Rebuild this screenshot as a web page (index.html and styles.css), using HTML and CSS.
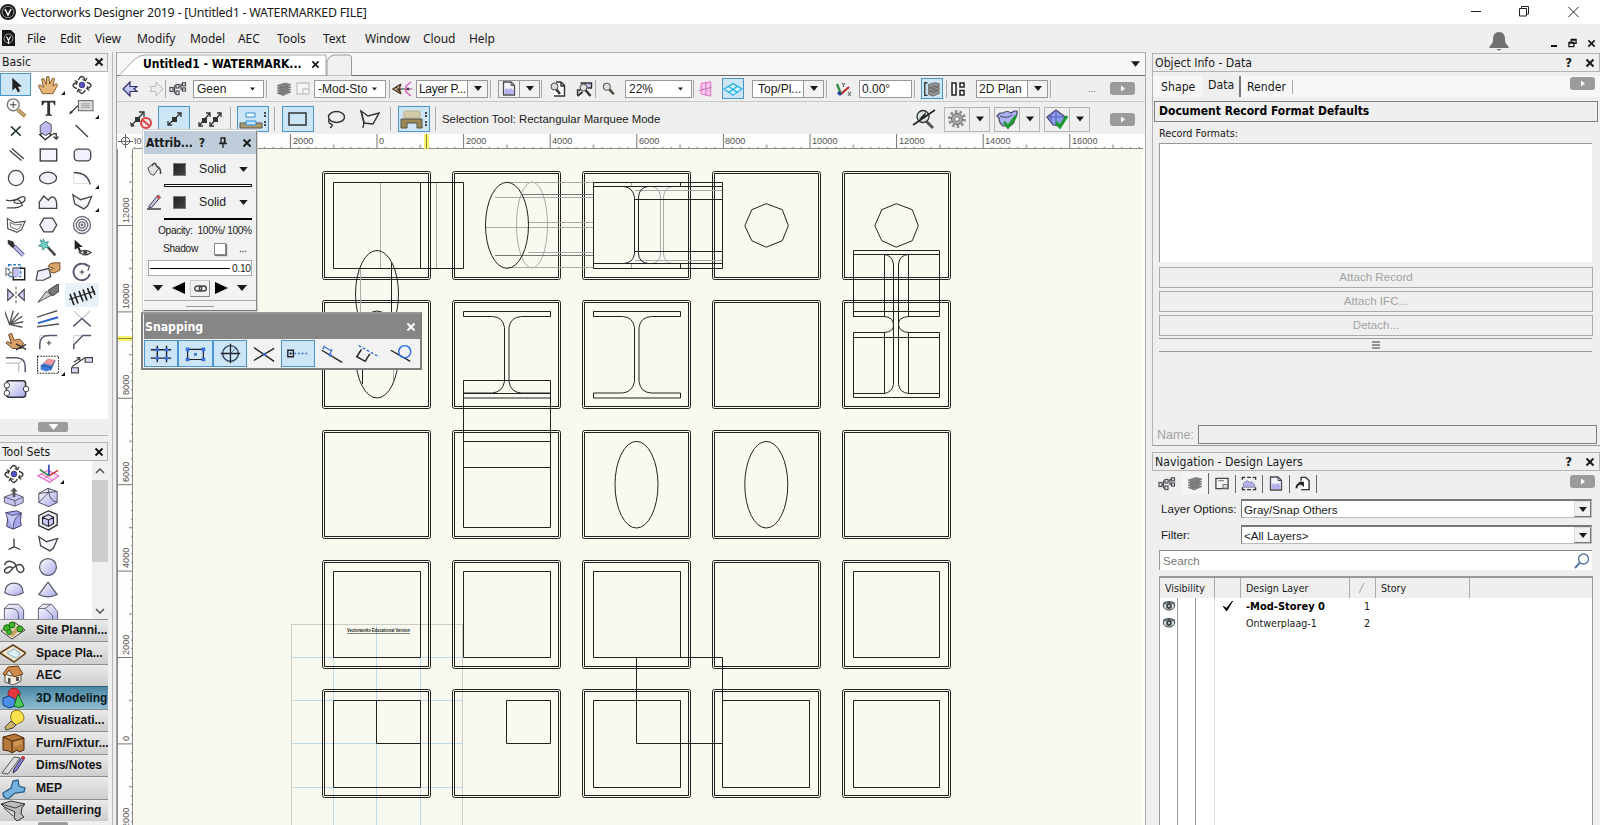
FILE: index.html
```html
<!DOCTYPE html>
<html lang="en">
<head>
<meta charset="utf-8">
<title>Vectorworks Designer 2019</title>
<link rel="stylesheet" href="styles.css">
</head>
<body>
<svg class="defs" width="0" height="0">
  <defs>
    <linearGradient id="lav" x1="0" y1="0" x2="1" y2="1"><stop offset="0" stop-color="#fff"/><stop offset="1" stop-color="#aaa9ea"/></linearGradient>
    <symbol id="i-x" viewBox="0 0 10 10"><path d="M1.500 1.500l7 7M8.500 1.500l-7 7" fill="none" stroke="currentColor" stroke-width="1.900"/></symbol>
    <symbol id="i-down" viewBox="0 0 10 6"><path d="M0 0h10L5 6z" fill="currentColor"/></symbol>
    <symbol id="i-tree" viewBox="0 0 18 14"><g fill="none" stroke="#4d4d55" stroke-width="1.200"><rect x="1" y="5.500" width="3" height="4"/><rect x="7" y="2.500" width="3" height="3.500"/><rect x="7" y="9" width="3" height="3.500"/><rect x="13.500" y=".8" width="3" height="3"/><rect x="13.500" y="6" width="3" height="3"/><path d="M4 7.500h1.500V4H7M5.500 7.500V11H7M10 4h2V2.300h1.500M12 4v3.500h1.500"/></g></symbol>
    <symbol id="i-layers" viewBox="0 0 16 14"><g fill="#858585" stroke="#5e5e5e" stroke-width=".6"><path d="M1 11l8-2.500 6 1.500-8 3.500z"/><path d="M1 8.500L9 6l6 1.500L7 11z"/><path d="M1 6l8-2.500L15 5 7 8.500z"/><path d="M1 3.500L9 1l6 1.500L7 6z"/></g></symbol>
    <symbol id="i-orbit" viewBox="0 0 24 24"><g fill="none" stroke="#3a3a3a" stroke-width="1.500"><path d="M8 6.500Q12-1 15.500 6.500M8 17.500q4 7.500 7.500 0"/><path d="M6.500 9Q-2 12.500 6.500 16M17.500 9q8.500 3.500 0 7"/><path d="M12.500 6l3.500 1.500L17.500 4M11.500 18L8 16.500 6.500 20M4 7l3 1.800L5.500 12M20 18l-3-2 1.500-3" stroke-width="1.200"/></g><circle cx="12" cy="12" r="3.200" fill="#5350c8" stroke="#222" stroke-width=".6"/></symbol>
    <symbol id="i-polyline" viewBox="0 0 24 24"><path d="M2 4l8.500 5.500L22.500 6 18 16.500l-4 3L4 14z" fill="#f7f7ff" stroke="#444" stroke-width="1.400"/></symbol>
    <symbol id="i-next" viewBox="0 0 25 13"><rect width="25" height="13" rx="3" fill="#9b9b9b"/><path d="M11 3.500v6l4-3z" fill="#fff"/></symbol>
    <symbol id="i-doc" viewBox="0 0 14 15"><path d="M1.500 1h7.500l3.500 3.500V14h-11z" fill="#f4f4fb" stroke="#4b4b55" stroke-width="1.300"/><path d="M9 1v3.500h3.500" fill="none" stroke="#4b4b55"/><path d="M2.500 13V9l2-2 2 1.500L9 7l2.500 2.500V13z" fill="#b4b1ee"/></symbol>
    <symbol id="i-mag" viewBox="0 0 16 16"><path d="M8.500 8.500l5 5.500" stroke="#4c473f" stroke-width="2.800"/><circle cx="5.500" cy="5.500" r="4" fill="#dededa" stroke="#5c5c5c" stroke-width="1.200"/></symbol>
    <symbol id="i-eye" viewBox="0 0 14 12"><path d="M1 5q6-5 12 0-1 5-6 5T1 5z" fill="#d6dfe2" stroke="#3d474a"/><circle cx="7" cy="6" r="2.900" fill="#3d474a"/><circle cx="7" cy="6" r="1" fill="#dde6e9"/><path d="M1 3.500q6-4 12 0" fill="none" stroke="#3d474a" stroke-width="1.200"/></symbol>
    <symbol id="i-rest2" viewBox="0 0 10 10"><g fill="#efefef" stroke="#111" stroke-width="1.400"><path d="M3.500 1h5.500v4.500H3.500z"/><path d="M1 4.300h5.500V9H1zM1 5.200h5.500M3.500 1.800h5.500"/></g></symbol>

    <g id="cell"><rect x=".5" y=".5" width="108" height="108" rx="2"/><rect x="2.500" y="2.500" width="104" height="104"/></g>
    <g id="beam"><path d="M0 0h87v5H58q-11 .5-12.500 11v54q1.500 11 12.500 11.500h29V86.500H0v-5h29q10-1 12-11.500V16Q39.500 5.500 29 5H0z"/></g>
    <path id="octagon" d="M21.500 0l16 6 6 16-6 15-16 6.500-14.500-6.500-7-15 7-16z"/>
    <pattern id="hticks" patternUnits="userSpaceOnUse" x="376.500" y="134" width="86.600" height="15"><path d="M.5 0v15M43.800 10.500v4.500M9.200 13v2M17.800 13v2M26.500 13v2M35.100 13v2M52.500 13v2M61.100 13v2M69.800 13v2M78.400 13v2" stroke="#777" fill="none"/></pattern>
    <pattern id="vticks" patternUnits="userSpaceOnUse" x="118" y="225" width="15" height="86.400"><path d="M0 .5h15M11 43.500h4M13 9.100h2M13 17.800h2M13 26.400h2M13 35.100h2M13 52.300h2M13 61h2M13 69.600h2M13 78.300h2" stroke="#777" fill="none"/></pattern>
  </defs>
</svg>

<header class="titlebar">
  <svg class="logo" viewBox="0 0 16 16"><circle cx="8" cy="8" r="8" fill="#1b1b1b"/><circle cx="8" cy="8" r="5.800" fill="none" stroke="#aaa" stroke-width=".8"/><path d="M5 5l3 6 3-6" fill="none" stroke="#fff" stroke-width="1.600"/></svg>
  <span class="title">Vectorworks Designer 2019 - [Untitled1 - WATERMARKED FILE]</span>
  <svg class="winbtns" viewBox="0 0 120 24"><g fill="none" stroke="#222"><path d="M6 11.500h10M103.500 7l10 10M113.500 7l-10 10"/><path d="M54.500 8.500h7v7.500h-7zM56.500 8.500v-2h7v7.500h-2"/></g></svg>
</header>

<nav class="menubar">
  <svg class="docicon" viewBox="0 0 13 16"><path d="M0 0h9l4 4v12H0z" fill="#151515"/><circle cx="6.500" cy="8.500" r="4.500" fill="none" stroke="#ccc" stroke-width=".8"/><path d="M4.500 6.500l2 4 2-4M6.500 11v3" stroke="#fff" stroke-width="1.200" fill="none"/></svg>
  <span class="w33">File</span><span class="w35">Edit</span><span class="w42">View</span><span class="w53">Modify</span><span class="w48">Model</span><span class="w39">AEC</span><span class="w46">Tools</span><span class="w42">Text</span><span class="w58">Window</span><span class="w46">Cloud</span><span class="w40">Help</span>
  <svg class="bell" viewBox="0 0 20 19"><path d="M10 0c4 0 6 3 6 7 0 4 1 5 3.500 7.500v1.500H.5v-1.500C3 12 4 11 4 7c0-4 2-7 6-7zM7.500 17h5q-2.500 3-5 0z" fill="#707070"/></svg>
  <span class="docbtns"><i class="minus"></i><svg width="9" height="10"><use href="#i-rest2"/></svg><svg width="9" height="9"><use href="#i-x"/></svg></span>
</nav>

<div class="workspace">
  <aside class="left">
    <div class="palhead basic"><span>Basic</span><svg width="10" height="10"><use href="#i-x"/></svg></div>
    <div class="tools">
      <div class="t on"><svg viewBox="0 0 24 24"><path d="M8 4v14l3.500-3 2.500 5 2.500-1.200-2.500-5 4.500-.3z" fill="#222"/></svg></div>
      <div class="t more"><svg viewBox="0 0 24 24"><path d="M6 21.500L1.500 13l1.500-1.500 4 3L5 5.500 7.500 5l2.500 6.500L10.500 3H13l.8 8L17 4.500l2 .8-1.500 8 3.500-3 1.500 1.500L17.500 21.500z" fill="#e9b67a" stroke="#7b5527"/></svg></div>
      <div class="t"><svg><use href="#i-orbit"/></svg></div>
      <div class="t"><svg viewBox="0 0 24 24"><path d="M14 14l8 7" stroke="#a27643" stroke-width="4"/><path d="M14 14l8 7" stroke="#dcbf88" stroke-width="1.500"/><circle cx="9" cy="8.500" r="6.500" fill="#fafafa" stroke="#777" stroke-width="1.500"/><path d="M9 5v7M5.500 8.500h7" stroke="#333"/></svg></div>
      <div class="t"><svg viewBox="0 0 24 24"><path d="M5 4h15v5h-1L17.500 6h-3.200v12.500l2.200 1v1H9v-1l2.200-1V6H8L6.500 9H5z" fill="#333"/></svg></div>
      <div class="t more"><svg viewBox="0 0 24 24" overflow="visible"><path d="M-1 18l8-8h2" stroke="#333" fill="none" stroke-width="1.300"/><rect x="8" y="4" width="16" height="11" fill="#ddd" stroke="#555"/><path d="M11 7.500h10M11 9.500h10M11 11.500h10" stroke="#999"/><path d="M-2 19l1.500-4L2 17z" fill="#333"/></svg></div>
      <div class="t"><svg viewBox="0 0 24 24"><path d="M6.500 7l10.500 10M17 7L6.500 17" stroke="#263b3b" stroke-width="1.700"/></svg></div>
      <div class="t"><svg viewBox="0 0 24 24"><path d="M3 16l6-3 7 3-7 5.500z" fill="#fff" stroke="#222" stroke-width="1.500"/><path d="M3.500 6l6-4.500 6 3.500v8l-6 4-6-3.500z" fill="#bbb9f0" stroke="#444"/><path d="M17 15h4v5M18 18l3 3 2.500-3" fill="none" stroke="#444" stroke-width="1.500"/></svg></div>
      <div class="t"><svg viewBox="0 0 24 24"><path d="M5 5.500l13.500 13" stroke="#444" stroke-width="1.500"/></svg></div>
      <div class="t"><svg viewBox="0 0 24 24"><path d="M5 7l13 11M7.500 5l13 11" stroke="#444" stroke-width="1.500"/></svg></div>
      <div class="t"><svg viewBox="0 0 24 24"><rect x="3.500" y="5.500" width="18" height="13" fill="#f5f5ff" stroke="#333" stroke-width="1.400"/></svg></div>
      <div class="t"><svg viewBox="0 0 24 24"><rect x="3.500" y="5.500" width="18" height="13" rx="4" fill="#f0f0ff" stroke="#444" stroke-width="1.400"/></svg></div>
      <div class="t"><svg viewBox="0 0 24 24"><circle cx="12" cy="12" r="8.300" fill="#fafaff" stroke="#444" stroke-width="1.400"/></svg></div>
      <div class="t"><svg viewBox="0 0 24 24"><ellipse cx="12" cy="12" rx="9.300" ry="6.300" fill="#f2f2ff" stroke="#444" stroke-width="1.400"/></svg></div>
      <div class="t more"><svg viewBox="0 0 24 24"><path d="M3 6v12h18" fill="none" stroke="#ddd"/><path d="M3 6q15 0 18 13" fill="#f2f2ff" stroke="#444" stroke-width="1.400"/></svg></div>
      <div class="t"><svg viewBox="0 0 24 24"><path d="M1 10q9 2 15-2.500 5-3 6 .5 0 5-7 5.500-6 0-5-3 2-3 7 1l2 4q-4 3-13 3H2" fill="none" stroke="#444" stroke-width="1.400"/></svg></div>
      <div class="t"><svg viewBox="0 0 24 24"><path d="M2.500 19v-7L7.500 5.500l5 4.500q3-5 6-3 3.500 2 3 12z" fill="#f2f2ff" stroke="#444" stroke-width="1.400"/></svg></div>
      <div class="t more"><svg><use href="#i-polyline"/></svg></div>
      <div class="t"><svg viewBox="0 0 24 24"><path d="M2.500 5l8 4.500L22 8l-4 9-5 3-10-4z" fill="#fff" stroke="#555" stroke-width="1.300"/><path d="M5.500 9l6 3 6.500-1-2 4-3 2-7-3z" fill="none" stroke="#666"/></svg></div>
      <div class="t"><svg viewBox="0 0 24 24"><path d="M3 12l4.500-7.500h9.500L21.500 12 17 19.500H7.500z" fill="#f2f2ff" stroke="#444" stroke-width="1.400"/></svg></div>
      <div class="t"><svg viewBox="0 0 24 24"><g fill="none" stroke="#737382" stroke-width="1.500"><circle cx="12" cy="12" r="9.300"/><circle cx="12" cy="12" r="6.300"/><circle cx="12" cy="12" r="3.400"/><circle cx="12" cy="12" r=".8"/></g></svg></div>
      <div class="t"><svg viewBox="0 0 24 24"><path d="M10 10l10 10" stroke="#55558c" stroke-width="4.500"/><path d="M10 10l10 10" stroke="#c3c1f2" stroke-width="2.500"/><path d="M3 3l6 2 2 5-3 2-5-5z" fill="#333"/></svg></div>
      <div class="t"><svg viewBox="0 0 24 24"><path d="M10 9l10 11" stroke="#444" stroke-width="2.800"/><path d="M7 2l1.500 4 4-1-2 3.500 3 3H9l-2.500 3-1-4-4-1L5 7.500 3.500 3l3 2z" fill="#6fd0c8" stroke="#347e7a" stroke-width=".8"/></svg></div>
      <div class="t"><svg viewBox="0 0 24 24"><path d="M4 3v11l3-2 2 4 2-1-2-4h4z" fill="#222"/><path d="M9 17q6-5 13 0-6 5-13 0z" fill="#eee" stroke="#444" stroke-width="1.400"/><circle cx="15.500" cy="17" r="2.200" fill="#444"/></svg></div>
      <div class="t"><svg viewBox="0 0 24 24"><path d="M4 4h13v13H4z" fill="none" stroke="#2b7bc4" stroke-width="1.700" stroke-dasharray="3 2"/><path d="M9 8h12.500v12.500H9z" fill="none" stroke="#222" stroke-width="1.600"/><path d="M9 8h7v9H9z" fill="#c5c3f3"/><path d="M1 7v9l2-2 2 3M1 7l6 6H4" stroke="#555" fill="#fff"/></svg></div>
      <div class="t"><svg viewBox="0 0 24 24" overflow="visible"><path d="M1 11l12-3 2 9-8 4H-1z" fill="#eef" stroke="#444" stroke-width="1.300"/><path d="M12 6q2-4 6-4h7v8l-6 3q-5 0-6-3l5-2z" fill="#dba469" stroke="#6c4621"/></svg></div>
      <div class="t"><svg viewBox="0 0 24 24"><path d="M18 5.500A9 9 0 1 0 20.500 14" fill="none" stroke="#555870" stroke-width="2"/><path d="M14.500 2.500l5.500 3-1.500 5" fill="none" stroke="#555870" stroke-width="1.500"/><path d="M12 9.500v5M9.500 12h5" stroke="#333"/></svg></div>
      <div class="t"><svg viewBox="0 0 24 24"><path d="M3 6l6.500 6L3 18zM21 6l-6.500 6 6.500 6z" fill="#d4d3f6" stroke="#445" stroke-width="1.300"/><path d="M12 3v18" stroke="#444" stroke-dasharray="3 2"/></svg></div>
      <div class="t"><svg viewBox="0 0 24 24"><path d="M1 20l9-12 6 4z" fill="#ccc" stroke="#444"/><path d="M12 7L24-1v9l-7 5z" fill="#777" stroke="#333"/></svg></div>
      <div class="t hov"><svg class="wide" viewBox="0 0 28 24"><path d="M1 16.500L27 8" stroke="#222" stroke-width="1.300"/><path d="M2 11l4 11M6 9.500l4 11M11 8l4 10.500M15 6.500l4 11M19.500 5l4 10.500M23.500 3l3.500 9" stroke="#222" stroke-width="1.700"/></svg></div>
      <div class="t"><svg viewBox="0 0 24 24"><path d="M-1 2l6 16 14 3M5 18L9 3M5 18L15 5M5 18l14-9M5 18l15-3" fill="none" stroke="#555" stroke-width="1.500"/></svg></div>
      <div class="t"><svg viewBox="0 0 24 24"><path d="M0 10L22 3M0 20.500l24-3" stroke="#555" stroke-width="1.500"/><path d="M1 16.500L23 10" stroke="#2b62cc" stroke-width="2.200"/></svg></div>
      <div class="t"><svg viewBox="0 0 24 24"><path d="M3 3l9 9 9-9" fill="none" stroke="#ccc" stroke-width="1.500"/><path d="M2.500 20L12 11.500l9.500 8.500" fill="none" stroke="#555870" stroke-width="1.600"/></svg></div>
      <div class="t"><svg viewBox="0 0 24 24"><path d="M4 4l3-1.500 3 7.500 6-1 4 4-2 6H8L1 13l2-1.500 4 2.500z" fill="#d9a065" stroke="#5e3c19"/><path d="M12 14l11 6M12 20.500l11-6" stroke="#333" stroke-width="1.600"/></svg></div>
      <div class="t"><svg viewBox="0 0 24 24"><path d="M3 19V5h16" fill="none" stroke="#ccc"/><path d="M3 20v-5Q3 5 13 5h9" fill="none" stroke="#555870" stroke-width="1.600"/><path d="M13 10.500v5M10.500 13h5" stroke="#333"/></svg></div>
      <div class="t"><svg viewBox="0 0 24 24"><path d="M3 19V5h16" fill="none" stroke="#ccc"/><path d="M3 20v-5L13 5h9" fill="none" stroke="#555870" stroke-width="1.600"/></svg></div>
      <div class="t"><svg viewBox="0 0 24 24"><path d="M1 4h12q9 1 9 9v7" fill="none" stroke="#555870" stroke-width="1.600"/><path d="M1 10h14v10M15 10l3-3" fill="none" stroke="#aaa"/></svg></div>
      <div class="t more"><svg viewBox="0 0 24 24"><rect x=".5" y="2.500" width="23" height="18.500" fill="none" stroke="#333" stroke-width="1.200" stroke-dasharray="2 1"/><path d="M4 13l7-7 9 1-4 10-6 2-6-2z" fill="#3e7ed8"/><path d="M8 9l4-4 8 1.500-3 6-9-2z" fill="#ee9696"/><path d="M4 12l11 3 5-8M15 15v3" fill="none" stroke="#1f4587" stroke-width=".8"/></svg></div>
      <div class="t"><svg viewBox="0 0 24 24"><path d="M.5 15H8v5.500H.5zM15.500 4h8v5h-8z" fill="#dddcf7" stroke="#444" stroke-width="1.300"/><path d="M1 14L15 4M3 9l6-4M6 4h3.500v3" fill="none" stroke="#444" stroke-width="1.400"/></svg></div>
      <div class="t"><svg viewBox="0 0 24 24" overflow="visible"><rect x="1.500" y="3" width="21" height="18" rx="3" fill="url(#lav)" stroke="#333" stroke-width="1.600"/><circle cx="2" cy="8" r="3" fill="#fff" stroke="#333"/><circle cx="2" cy="16.500" r="3" fill="#fff" stroke="#333"/><circle cx="23" cy="12" r="3" fill="#fff" stroke="#333"/></svg></div>
    </div>
    <div class="collapse"><b><svg width="11" height="6"><use href="#i-down"/></svg></b></div>
    <div class="palhead sets"><span>Tool Sets</span><svg width="10" height="10"><use href="#i-x"/></svg></div>
    <div class="setrow">
      <div class="settools">
        <div class="t"><svg><use href="#i-orbit"/></svg></div>
        <div class="t more"><svg viewBox="0 0 24 24"><path d="M1 14l11-6 12 6-10 7z" fill="#fde4f7" stroke="#e569c4" stroke-width="1.300"/><path d="M5 12l12 7M18 11L7 17" stroke="#e569c4"/><path d="M13 14V2" stroke="#3344bb" stroke-width="1.800"/><path d="M13 14l10-6" stroke="#c33" stroke-width="1.500"/><path d="M13 14L3 7" stroke="#2a8a3a" stroke-width="1.500"/></svg></div>
        <div class="t"><svg viewBox="0 0 24 24"><path d="M1.500 12L12 8l10 4v6l-9 4-11.500-4z" fill="#c6c5f1" stroke="#556"/><path d="M1.500 12L13 16l9-4M13 16v6" fill="none" stroke="#556"/><path d="M10.500 12V6H8l4-4.500L16 6h-2.500v6z" fill="#555"/></svg></div>
        <div class="t"><svg viewBox="0 0 24 24"><path d="M2 8l10-5.500L22 6v12l-9 4.500L2 18z" fill="url(#lav)" stroke="#445"/><path d="M2 18L13 7l9-1M12 2.500l1 4.500q1 9 9 11M13 7L2 8" fill="none" stroke="#445"/></svg></div>
        <div class="t"><svg viewBox="0 0 24 24"><path d="M3 4l12-2 5 2.500-1 8 1 5.500-9 4-7-3 1-8z" fill="#a7a6ee" stroke="#335"/><path d="M3 4l7 3 10-2.500Q13 9 12 14t-1 8" fill="#c9c8f6" stroke="#335" stroke-width=".8"/></svg></div>
        <div class="t"><svg viewBox="0 0 24 24"><path d="M2 7l10.500-5L22 6v11.500L12.500 23 2 18z" fill="#eee" stroke="#222" stroke-width="1.300"/><path d="M6 9l6.500-3L18 9v7l-5.500 3L6 16zM6 9l6.500 3L18 9M12.500 12v7" fill="#c9c8f3" stroke="#223" stroke-width="1.200"/></svg></div>
        <div class="t"><svg viewBox="0 0 24 24"><path d="M12 6v9l-6 3M12 15l7 3" fill="none" stroke="#333" stroke-width="1.400"/></svg></div>
        <div class="t"><svg><use href="#i-polyline"/></svg></div>
        <div class="t"><svg viewBox="0 0 24 24"><path d="M1.500 10q2-5 7-4t6 6q1 6 5 6 4-1 3-5-2-5-6-3.500-5 2.500-8 6.500-4 4-6.500 1.500-1.500-3 3-5t6 2" fill="none" stroke="#444" stroke-width="1.600"/></svg></div>
        <div class="t"><svg viewBox="0 0 24 24"><circle cx="12" cy="12" r="9.200" fill="url(#lav)" stroke="#556" stroke-width="1.300"/></svg></div>
        <div class="t"><svg viewBox="0 0 24 24"><path d="M2 15Q2.500 4.500 12 4.500T22 15q-10 6-20 0z" fill="url(#lav)" stroke="#556" stroke-width="1.300"/></svg></div>
        <div class="t"><svg viewBox="0 0 24 24"><path d="M12 3.500L22 17q-10 5-20 0z" fill="url(#lav)" stroke="#556" stroke-width="1.300"/></svg></div>
        <div class="t"><svg viewBox="0 0 24 24"><path d="M1.500 7l5-4.500H17l5.500 6V22h-21z" fill="url(#lav)" stroke="#556"/><path d="M1.500 7H10q7 1 7 8v7" fill="none" stroke="#556"/></svg></div>
        <div class="t"><svg viewBox="0 0 24 24"><path d="M1.500 7l5-4.500H16l6.500 8V22h-21z" fill="url(#lav)" stroke="#556"/><path d="M1.500 7H9l8 8v7M9 7l6-4.500" fill="none" stroke="#556"/></svg></div>
      </div>
      <div class="scroll"><svg viewBox="0 0 10 6"><path d="M1 5l4-4 4 4" fill="none" stroke="#555" stroke-width="1.500"/></svg><i></i><svg viewBox="0 0 10 6"><path d="M1 1l4 4 4-4" fill="none" stroke="#555" stroke-width="1.500"/></svg></div>
    </div>
    <ul class="cats">
      <li><svg viewBox="0 0 26 22"><path d="M1 12L14 3l11 8-13 9z" fill="#e9e2c8" stroke="#444"/><path d="M9 16l8-9 4 2-8 9z" fill="#caa268"/><circle cx="7" cy="9" r="3.300" fill="#3fb52c" stroke="#1d6b15"/><circle cx="12" cy="6" r="3" fill="#3fb52c" stroke="#1d6b15"/><circle cx="20" cy="10" r="3" fill="#3fb52c" stroke="#1d6b15"/><circle cx="9" cy="13" r="2.500" fill="#3fb52c" stroke="#1d6b15"/></svg>Site Planni...</li>
      <li><svg viewBox="0 0 26 22"><path d="M0 11L13 3l13 8-12 9z" fill="#f3e6cf" stroke="#65451d" stroke-width="1.500"/><path d="M7 11l7-4 6 4q-2 6-6 4t-7-4z" fill="#e1f1fa" stroke="#8bb4ca"/></svg>Space Pla...</li>
      <li><svg viewBox="0 0 26 22"><path d="M5 10l6 2 10-3v8l-8 4-8-3z" fill="#f6eedd" stroke="#555"/><path d="M3 10l5-7 10-1 5 8-9 3-5-7-4 6z" fill="#d08a4b" stroke="#6d3d15"/><path d="M8 14h2.500v5H8zM16 13h3v4h-3z" fill="#555"/></svg>AEC</li>
      <li class="sel"><svg viewBox="0 0 26 22"><circle cx="14" cy="7" r="6" fill="#e4373e" stroke="#7d1117" stroke-width=".8"/><path d="M3 11l6-2 6 3v7l-6 2-6-3z" fill="#4c8be8" stroke="#173f84"/><path d="M18 7l6 12q-5 3-10 0z" fill="#51c95b" stroke="#146c1e"/></svg>3D Modeling</li>
      <li><svg viewBox="0 0 26 22"><path d="M12 3q6-4 10 1t0 9q-4 1-6 3l-4-3q-3-5 0-10z" fill="#ffe34e" stroke="#8f7310"/><path d="M11 12l5 4-3 3-7 2-1-3z" fill="#c9b465" stroke="#444"/></svg>Visualizati...</li>
      <li><svg viewBox="0 0 26 22"><path d="M3 5l12-3 9 4v12l-5 2-2-2-5 3-3-2-6-1z" fill="#b8793c" stroke="#4a2809"/><path d="M3 5l9 4 12-3M12 9v11" fill="none" stroke="#4a2809"/><path d="M14 10l8-2v4l-8 3z" fill="#cf9558"/></svg>Furn/Fixtur...</li>
      <li><svg viewBox="0 0 26 22"><path d="M2 19L14 3l6 1L8 20z" fill="#ddd" stroke="#555"/><path d="M13 19l1-4 8-12 2.500 1.500-8 12z" fill="#8583de" stroke="#334"/><path d="M22 3l2.500 1.500" stroke="#c33" stroke-width="3"/></svg>Dims/Notes</li>
      <li><svg viewBox="0 0 26 22"><path d="M3 16l8-5 2-7 5-1 1 6 6 2-1 4-9 1-7 6q-5-1-5-6z" fill="#76b3de" stroke="#285d87" stroke-width="1.300"/></svg>MEP</li>
      <li><svg viewBox="0 0 26 22"><path d="M1 5l10-3 14 3-3 4-1 6 3 3-7 4-3-3 1-6L4 8z" fill="#bdbdbd" stroke="#333"/><path d="M1 5l14 4 10-4M4 9l9 8" fill="none" stroke="#444"/></svg>Detaillering</li>
    </ul>
    <div class="collapse last"><b></b></div>
  </aside>

  <main class="doc">
    <div class="tabs">
      <svg class="tabshape" viewBox="0 0 240 23"><path d="M2 22.500L17 7q5-5 11-5h181v20.500z" fill="#fff"/><path d="M2 22.500L17 7q5-5 11-5h181v21" fill="none" stroke="#a5a5a5"/><path d="M210 8q3-6 7-6h15q2.500 0 2.500 3v18h-24.500z" fill="#f1f1f1" stroke="#999"/></svg>
      <span class="tabname">Untitled1 - WATERMARK...</span><svg class="tabx" width="9" height="9"><use href="#i-x"/></svg>
      <svg class="tabdd" width="9" height="6"><use href="#i-down"/></svg>
    </div>
    <div class="bar1">
      <svg class="w16 m5" viewBox="0 0 16 16"><path d="M1 8l7-7v4.500h7L12 8l3 2.500H8V15z" fill="#c6c9f3" stroke="#30306a" stroke-width="1.200"/></svg>
      <svg class="w16 m10" viewBox="0 0 16 16"><path d="M15 8L8 1v4.500H2L4 8l-2 2.500h6V15z" fill="#eee" stroke="#bbb"/></svg>
      <i class="sep m1"></i><svg class="w18 m3"><use href="#i-tree"/></svg>
      <div class="combo flat w71 m6"><span>Geen</span><svg><use href="#i-down"/></svg></div>
      <i class="sep m2"></i><svg class="w16 m9"><use href="#i-layers"/></svg>
      <svg class="w16 m3" viewBox="0 0 16 16"><path d="M2 2h12v11H2zM8 8h6v5H8z" fill="#f5f5f5" stroke="#c5c5c5" stroke-width="1.300"/></svg>
      <div class="combo flat w72 m3"><span>-Mod-Sto</span><svg><use href="#i-down"/></svg></div>
      <i class="sep m3"></i>
      <svg class="w22 m1" viewBox="0 0 22 16"><path d="M10 3L2 8l8 5M10 3q-3 5 0 10M5 6q3 2 2 4" fill="#ddc3a0" stroke="#4b3523" stroke-width="1.400"/><path d="M9 8h9" stroke="#333"/><path d="M20 1l-5 4v6l5 4" fill="none" stroke="#e05fbc" stroke-width="1.500"/><path d="M16 8h5" stroke="#d13aa6"/><circle cx="17" cy="8" r="1.500" fill="#444"/></svg>
      <div class="combo w72 m3 tight"><span>Layer P...</span><b><svg><use href="#i-down"/></svg></b></div>
      <i class="sep m2"></i>
      <div class="combo btn w42 m7"><svg class="docg"><use href="#i-doc"/></svg><b><svg><use href="#i-down"/></svg></b></div>
      <i class="sep m1"></i>
      <svg class="w16 m8" viewBox="0 0 16 16"><path d="M6 1h5l3.500 3.500V15H4M11 1v4h3.500" fill="#fff" stroke="#333" stroke-width="1.400"/><path d="M6 8l4 5" stroke="#333" stroke-width="2.500"/><circle cx="4.500" cy="5.500" r="3.500" fill="#ddd" stroke="#444"/></svg>
      <svg class="w17 m10" viewBox="0 0 16 16"><path d="M4 2h11v5h-4M1 14V9h3" fill="#c5c5f2" stroke="#333" stroke-width="1.400"/><path d="M9 9l5 6" stroke="#333" stroke-width="2.500"/><circle cx="7" cy="6.500" r="3.500" fill="#ddd" stroke="#444"/><path d="M1 15l5-4" stroke="#333" stroke-width="2"/></svg>
      <i class="sep m2"></i><svg class="w14 m6"><use href="#i-mag"/></svg>
      <div class="combo flat w67 m9"><span>22%</span><svg><use href="#i-down"/></svg></div>
      <i class="sep m1"></i>
      <svg class="w17 m3" viewBox="0 0 17 20" overflow="visible"><path d="M3 3l12-2v18L3 16z" fill="#ffc5ef" stroke="#ea66c5" stroke-width="1.200"/><path d="M9 1v17M0 12l16-4" stroke="#a66ab0"/><path d="M1 8l15 5" stroke="#f09bd8"/></svg>
      <div class="act w22 m8"><svg viewBox="0 0 22 20"><path d="M1 10l10-6 10 6-10 7zM6 7l10 7M16 7L6 14" fill="#d3f2fd" stroke="#2cb3e6" stroke-width="1.500"/></svg></div>
      <div class="combo w72 m8"><span class="in">Top/Pl...</span><b><svg><use href="#i-down"/></svg></b></div>
      <i class="sep m2"></i>
      <svg class="w17 m8" viewBox="0 0 17 16"><path d="M6 13L2 3" stroke="#2a8a3a" stroke-width="2.200"/><path d="M6 13l8-7" stroke="#b92b2b" stroke-width="2.200"/><path d="M3 11l3 3" stroke="#22449b" stroke-width="3"/><path d="M13 11l3 4M16 11l-3 4M7 2l1.500 2L10 2M8.500 4v2" stroke="#555" fill="none"/></svg>
      <div class="combo field w53 m7"><span>0.00°</span></div>
      <i class="sep m2"></i>
      <div class="act w22 m6"><svg viewBox="0 0 22 20"><path d="M6 3H3v14h3" fill="none" stroke="#333" stroke-width="1.500"/><g fill="#909090" stroke="#555" stroke-width=".7"><path d="M7 13l7-2 5 1v3l-7 3-5-2zM7 9l7-2 5 1v3l-7 3-5-2zM7 5l7-2 5 1v3l-7 3-5-2z"/></g></svg></div>
      <i class="sep m3"></i>
      <svg class="w14 m4" viewBox="0 0 14 14"><path d="M1 1h4v12H1zM9 1h4v4H9zM9 8.500h4V13H9z" fill="#fff" stroke="#222" stroke-width="1.500"/></svg>
      <div class="combo w72 m11"><span>2D Plan</span><b><svg><use href="#i-down"/></svg></b></div>
      <i class="sep m2"></i><span class="dots w10 m37">...</span><svg class="nx m12"><use href="#i-next"/></svg>
    </div>
    <div class="bar2">
      <svg class="w22 m13" viewBox="0 0 22 22"><path d="M2 17L13 5M9 4h5v5" fill="none" stroke="#333" stroke-width="1.300"/><path d="M0 14l1 5 4-1M5 9h5v5H5z" fill="#333"/><circle cx="16" cy="15" r="5" fill="#fbe9e9" stroke="#d94040" stroke-width="2"/><path d="M12.500 12l7 6" stroke="#d94040" stroke-width="2"/></svg>
      <div class="act w32 m6"><svg viewBox="0 0 32 24"><path d="M10 18L23 6M19 6h4v4M10 14v4h4" fill="none" stroke="#333" stroke-width="1.300"/><rect x="14" y="10" width="5" height="5" fill="#333"/></svg></div>
      <svg class="w25 m8" viewBox="0 0 25 22"><path d="M1 18L12 5M12 18L23 5M1 14v4h4M19 5h4v4M8 5h4v4M12 14v4h4" fill="none" stroke="#333" stroke-width="1.300"/><path d="M4 10h5v5H4zM15 9h5v5h-5z" fill="#333"/></svg>
      <i class="sep m7"></i>
      <div class="act w32 m6"><svg viewBox="0 0 32 24"><path d="M9 6h9v4H9z" fill="#fff" stroke="#2b8fd8"/><path d="M3 16h22v5H3z" fill="#ad9c67" stroke="#555"/><path d="M9 14h10v4H9z" fill="#bfe3f9" stroke="#2b8fd8"/><path d="M28 5v6M28 14v6" stroke="#445" stroke-width="2" stroke-dasharray="2 1"/></svg></div>
      <i class="sep m5"></i>
      <div class="act w32 m7"><svg viewBox="0 0 32 24"><rect x="7" y="6" width="17" height="12" fill="none" stroke="#333" stroke-width="1.500"/></svg></div>
      <svg class="w18 m13" viewBox="0 0 18 22"><ellipse cx="9.500" cy="9" rx="8" ry="5.500" fill="none" stroke="#333" stroke-width="1.400"/><path d="M2 11q-1 4 2 5t-1 4" fill="none" stroke="#333" stroke-width="1.400"/></svg>
      <svg class="w20 m15" viewBox="0 0 20 22"><path d="M1 3l7 5 11-3-6 11-9-1z" fill="none" stroke="#333" stroke-width="1.400"/><path d="M3 20l1-6L1 3" fill="none" stroke="#333" stroke-width="1.300"/></svg>
      <i class="sep m10"></i>
      <div class="act w32 m7"><svg viewBox="0 0 32 24"><path d="M6 4h16v7H6z" fill="#d5caa8" stroke="#bbb28c"/><path d="M3 12h21v9h-5v-5H9v5H3z" fill="#9b8a55" stroke="#555043"/><path d="M28 5v6M28 14v6" stroke="#445" stroke-width="2" stroke-dasharray="2 1"/></svg></div>
      <i class="sep m5"></i>
      <span class="mode m6">Selection Tool: Rectangular Marquee Mode</span>
      <svg class="w24 auto" viewBox="0 0 24 22"><path d="M14 13l7 7" stroke="#555" stroke-width="3"/><circle cx="11" cy="8.500" r="6" fill="#d8e4e4" stroke="#333" stroke-width="1.300"/><path d="M1 17L23 2" stroke="#222" stroke-width="1.600"/><path d="M7 11l7-7-1 6z" fill="#222"/></svg>
      <div class="big m8"><svg viewBox="0 0 24 22"><circle cx="12" cy="11" r="7.500" fill="none" stroke="#8e8e8e" stroke-width="3" stroke-dasharray="2.600 2.100"/><circle cx="12" cy="11" r="5.500" fill="#a9a9a9" stroke="#666"/><circle cx="12" cy="11" r="2.300" fill="#fff" stroke="#777"/></svg><b><svg><use href="#i-down"/></svg></b></div>
      <div class="big m4"><svg viewBox="0 0 24 22"><path d="M2 8l3-3h3q4-3 8 0l3-2h3v4l-2 2q0 6-5 9H8q-4-3-4-8z" fill="#aab0f0" stroke="#446" stroke-width="1.200"/><path d="M5 8q7 3 12-1" stroke="#446" fill="none"/><path d="M9 14l4 5 8-11" fill="none" stroke="#1b9b2b" stroke-width="3"/></svg><b><svg><use href="#i-down"/></svg></b></div>
      <div class="big m4"><svg viewBox="0 0 24 22"><path d="M2 9l9-7 9 7-5 9-7-1z" fill="#8e9af0" stroke="#446" stroke-width="1.200"/><path d="M11 2v16M2 9h18M6 6v8" stroke="#5560b0"/><path d="M11 14l4 5 7-11" fill="none" stroke="#1b9b2b" stroke-width="3"/></svg><b><svg><use href="#i-down"/></svg></b></div>
      <svg class="nx m20"><use href="#i-next"/></svg>
    </div>
    <svg class="canvas" viewBox="117 134 1028 691" shape-rendering="crispEdges">
      <rect x="117" y="134" width="1028" height="691" fill="#fdfdfb"/>
      <rect x="133" y="149" width="1010" height="676" fill="#f9f9f0"/>
      <rect x="134" y="134" width="1009" height="15" fill="url(#hticks)"/>
      <rect x="118" y="150" width="15" height="675" fill="url(#vticks)"/>
      <path d="M133 148.500h1010M132.500 149v676M117.500 149v676" stroke="#8a8a8a" fill="none"/>
      <g fill="none" stroke="#666" stroke-width="1.200"><circle cx="125.500" cy="141" r="4"/><path d="M118 141.500h15M125.500 134v14"/></g>
      <path d="M424 134h5v15h-5zM118 336h14v5h-14z" fill="#f7f36a"/>
      <path d="M426.500 134v15M118 338.500h14" stroke="#8c8a3c"/>
      <g class="rl"><text x="134" y="144">I0</text><text x="293" y="144">2000</text><text x="379" y="144">0</text><text x="466" y="144">2000</text><text x="552" y="144">4000</text><text x="639" y="144">6000</text><text x="725" y="144">8000</text><text x="812" y="144">10000</text><text x="899" y="144">12000</text><text x="985" y="144">14000</text><text x="1072" y="144">16000</text>
        <text transform="translate(129 223) rotate(-90)">12000</text><text transform="translate(129 309) rotate(-90)">10000</text><text transform="translate(129 395) rotate(-90)">8000</text><text transform="translate(129 482) rotate(-90)">6000</text><text transform="translate(129 568) rotate(-90)">4000</text><text transform="translate(129 655) rotate(-90)">2000</text><text transform="translate(129 741) rotate(-90)">0</text><text transform="translate(129 828) rotate(-90)">2000</text></g>
      <g fill="none" stroke="#bcdcec"><path d="M291 657.500h172M291 700.500h172M291 743.500h172M291 787.500h172M333.500 657v168M376.500 625v200M420.500 657v168"/></g>
      <path d="M291.500 825V624.500h171V825" fill="none" stroke="#ccccc6"/>
      <g fill="none" stroke="#222" shape-rendering="auto">
        <use href="#cell" x="322" y="171"/><use href="#cell" x="452" y="171"/><use href="#cell" x="582" y="171"/><use href="#cell" x="712" y="171"/><use href="#cell" x="842" y="171"/>
        <use href="#cell" x="322" y="300"/><use href="#cell" x="452" y="300"/><use href="#cell" x="582" y="300"/><use href="#cell" x="712" y="300"/><use href="#cell" x="842" y="300"/>
        <use href="#cell" x="322" y="430"/><use href="#cell" x="452" y="430"/><use href="#cell" x="582" y="430"/><use href="#cell" x="712" y="430"/><use href="#cell" x="842" y="430"/>
        <use href="#cell" x="322" y="560"/><use href="#cell" x="452" y="560"/><use href="#cell" x="582" y="560"/><use href="#cell" x="712" y="560"/><use href="#cell" x="842" y="560"/>
        <use href="#cell" x="322" y="689"/><use href="#cell" x="452" y="689"/><use href="#cell" x="582" y="689"/><use href="#cell" x="712" y="689"/><use href="#cell" x="842" y="689"/>
        <g stroke="#aaa"><path d="M380.500 182v86M436.500 182v86M360.500 268v44M393.500 340v40M507 182.500h87M507 267.500h87M495 197.500h99M528 222.500h66M485 227.500h109M528 252.500h66M631.500 182v4M631.500 263v5M660.500 197v57M663.500 197v57M635 190.500h87M635 260.500h87M652 186.500q8 1 8.500 11M672 186.500q-8 1-8.500 11M652 263.500q8-1 8.500-10M672 263.500q-8-1-8.500-10"/><ellipse cx="532" cy="225" rx="15.500" ry="43"/></g>
        <path d="M333.500 182.500h130v86h-130zM420.500 182v86"/>
        <path d="M391.500 263v50M362.500 320v64"/><path d="M522 194.500h72M495 255.500h99" stroke="#777"/>
        <ellipse cx="377" cy="294" rx="21.500" ry="43.500"/><ellipse cx="377" cy="354.500" rx="21.500" ry="43.500"/><ellipse cx="507" cy="225.300" rx="21.500" ry="43"/>
        <path d="M593.500 182.500h129v86h-129zM593 186.500h129M593 263.500h129M624 186.500q9 1 10.500 11v56q-1 9-10.500 10M648 186.500q-9 1-9.500 11v56q.5 9 9.500 10M635 199.500h88M635 251.500h88M680.500 182v4M680.500 263v5"/>
        <use href="#octagon" x="744.800" y="203.700"/><use href="#octagon" x="874.800" y="203.700"/>
        <use href="#beam" x="463.500" y="311.500"/><use href="#beam" x="593.500" y="311.500"/>
        <path d="M853.500 316.500v-66h86v66M853 254.500h86M884.500 254v62M908.500 254v62M853 311.500h86M853 316.500h31q9 .5 9.500 8t-9.500 8h-30.500v65h86v-65H909q-10-.5-10.500-8t10.500-8h30.500M853 337.500h86M884.500 332v61M908.500 332v61M853 393.500h31q8-1 9.500-9V264q-1.500-9-9.500-9.500M939.500 393.500h-31q-9-1-10-9V264q1-9 10-9.500"/>
        <path d="M463.500 380.500h87v147h-87zM463 393.500h87M463 441.500h87M463 467.500h87"/>
        <ellipse cx="636.500" cy="484.700" rx="21.500" ry="43.300"/><ellipse cx="766.300" cy="484.700" rx="21.500" ry="43.300"/>
        <path d="M333.500 571.500h87v86h-87zM463.500 571.500h87v86h-87zM593.500 571.500h87v86h-87zM853.500 571.500h86v86h-86zM333.500 700.500h87v87h-87zM376.500 700.500v43h44M506.500 700.500h44v43h-44zM593.500 700.500h87v87h-87zM722.500 700.500h87v87h-87zM853.500 700.500h86v87h-86zM636.500 657.500h86v86h-86z"/>
      </g>
      <text class="edu" x="347" y="632" textLength="63" lengthAdjust="spacingAndGlyphs">Vectorworks Educational Version</text>
    </svg>
  </main>

  <aside class="right">
    <section class="objinfo">
      <div class="palhead"><span>Object Info - Data</span><em>?</em><svg width="10" height="10"><use href="#i-x"/></svg></div>
      <div class="otabs"><span>Shape</span><span class="cur">Data</span><span class="ren">Render</span><svg class="nx"><use href="#i-next"/></svg></div>
      <div class="docrec">Document Record Format Defaults</div>
      <div class="rf">Record Formats:</div>
      <div class="list"></div>
      <div class="pb">Attach Record</div><div class="pb">Attach IFC...</div><div class="pb">Detach...</div>
      <div class="split"><svg width="8" height="8"><path d="M0 1h8M0 4h8M0 7h8" stroke="#777" stroke-width="1.500"/></svg></div>
      <div class="namerow"><span>Name:</span><i></i></div>
    </section>
    <section class="navp">
      <div class="palhead"><span>Navigation - Design Layers</span><em>?</em><svg width="10" height="10"><use href="#i-x"/></svg></div>
      <div class="ntabs">
        <span class="n1"><svg><use href="#i-tree"/></svg></span><span class="n2"><svg><use href="#i-layers"/></svg></span>
        <span><svg viewBox="0 0 16 16"><path d="M1.500 2.500h13v11h-13z" fill="#f6f6f6" stroke="#444" stroke-width="1.400"/><path d="M4 5h6M9 9h5v4H9z" stroke="#666" fill="#ddd"/></svg></span>
        <span><svg viewBox="0 0 16 16"><path d="M1 4V1.500h3M12 1.500h3V4M1 12v2.500h3M12 14.500h3V12M6 1.500h4M6 14.500h4" fill="none" stroke="#333" stroke-width="1.500"/><path d="M2 12V8l4-3 3 2 2-1 3 3v3z" fill="#b4b1ee" stroke="#556" stroke-width=".6"/></svg></span>
        <span><svg><use href="#i-doc"/></svg></span>
        <span><svg viewBox="0 0 16 16"><path d="M6 5V1.500h5l3.500 3.500v9.500H6" fill="#fff" stroke="#333" stroke-width="1.500"/><path d="M1 13q0-5 6-5" fill="none" stroke="#222" stroke-width="2"/><path d="M3 6h6v6z" fill="#222"/></svg></span>
        <svg class="nx"><use href="#i-next"/></svg>
      </div>
      <div class="frow"><label>Layer Options:</label><div class="sel2">Gray/Snap Others<b><svg><use href="#i-down"/></svg></b></div></div>
      <div class="frow two"><label>Filter:</label><div class="sel2">&lt;All Layers&gt;<b><svg><use href="#i-down"/></svg></b></div></div>
      <div class="search">Search<svg viewBox="0 0 16 16"><circle cx="9.500" cy="6" r="5" fill="#fff" stroke="#5775a0" stroke-width="1.400"/><path d="M6 9.500L1 15" stroke="#5775a0" stroke-width="2"/></svg></div>
      <div class="table">
        <div class="th"><span>Visibility</span><span></span><span>Design Layer</span><span class="sort">╱</span><span>Story</span><span></span></div>
        <div class="tr"><span><svg><use href="#i-eye"/></svg></span><span></span><span></span><span><svg viewBox="0 0 12 13"><path d="M1 7l3.500 5L11 1 4.500 9z" fill="#000" stroke="#000"/></svg></span><span class="b">-Mod-Storey 0</span><span>1</span></div>
        <div class="tr"><span><svg><use href="#i-eye"/></svg></span><span></span><span></span><span></span><span>Ontwerplaag-1</span><span>2</span></div>
        <div class="tr fill"><span></span><span></span><span></span><span></span><span></span><span></span></div>
      </div>
    </section>
  </aside>
</div>

<div class="attr">
  <div class="ahead"><span>Attrib...</span><em>?</em><svg width="8" height="11" viewBox="0 0 8 11"><path d="M2 1h4v5H2zM0 6.500h8M4 7v4M5.500 1v5" fill="none" stroke="#222" stroke-width="1.300"/></svg><svg width="10" height="10"><use href="#i-x"/></svg></div>
  <div class="arow"><svg viewBox="0 0 16 16"><path d="M2 7l6-5 5 5-5 7q-4 1-6-7z" fill="#e2e2e2" stroke="#444"/><path d="M6 5q3-6 5 1M11 6q4 0 3.500 7" fill="none" stroke="#444" stroke-width="1.500"/></svg><i></i><span>Solid</span><svg class="dn"><use href="#i-down"/></svg></div>
  <div class="fillline"></div>
  <div class="arow pen"><svg viewBox="0 0 16 16"><path d="M3 12L12 1l2.500 2L6 13l-3 1z" fill="#bfc3dd" stroke="#445"/><path d="M11 2l3 2.500" stroke="#c55" stroke-width="2.500"/><path d="M1 15h14" stroke="#222" stroke-width="1.300"/></svg><i></i><span>Solid</span><svg class="dn"><use href="#i-down"/></svg></div>
  <div class="penline"></div>
  <div class="opac">Opacity:&nbsp; 100%/ 100%</div>
  <div class="shad"><span>Shadow</span><i></i><span>...</span></div>
  <div class="thick"><i></i>0.10</div>
  <div class="arrows"><svg class="d" viewBox="0 0 10 6"><use href="#i-down"/></svg><svg class="h" viewBox="0 0 13 12"><path d="M13 0v12L0 6z"/></svg><b><svg viewBox="0 0 13 7"><rect x=".7" y="1" width="7" height="5" rx="2.500" fill="none" stroke="#444" stroke-width="1.400"/><rect x="5.300" y="1" width="7" height="5" rx="2.500" fill="none" stroke="#444" stroke-width="1.400"/></svg></b><svg class="h" viewBox="0 0 13 12"><path d="M0 0v12l13-6z"/></svg><svg class="d" viewBox="0 0 10 6"><use href="#i-down"/></svg></div>
  <div class="grip"></div>
</div>

<div class="snap">
  <div class="shead"><span>Snapping</span><svg width="10" height="10"><use href="#i-x"/></svg></div>
  <div class="sbtns">
    <div class="on"><svg viewBox="0 0 34 27"><path d="M6 9.500h22M6 18.500h22M13 5v18M23 5v18" stroke="#222" stroke-width="1.500"/><path d="M11 8h4v3h-4zM21 8h4v3h-4zM11 17h4v3h-4zM21 17h4v3h-4z" fill="#3a6fe0"/></svg></div>
    <div class="on"><svg viewBox="0 0 34 27"><path d="M9 9h17v11H9z" fill="none" stroke="#222" stroke-width="1.300"/><path d="M7 7h4v4H7zM24 7h4v4h-4zM7 18h4v4H7zM24 18h4v4h-4zM16 13h3v3h-3z" fill="#3a6fe0"/></svg></div>
    <div class="on"><svg viewBox="0 0 34 27"><circle cx="17.500" cy="13.500" r="8.500" fill="none" stroke="#346" stroke-width="1.500"/><path d="M7 13.500h21M17.500 3v21" stroke="#222" stroke-width="1.400"/><path d="M17.500 13.500l6-6" stroke="#3a6fe0"/></svg></div>
    <div><svg viewBox="0 0 34 27"><path d="M6 7l22 15M6 21L28 8" stroke="#222" stroke-width="1.400"/><circle cx="17.500" cy="14.500" r="1.800" fill="#3a6fe0"/></svg></div>
    <div class="on"><svg viewBox="0 0 34 27"><path d="M6 10h6v7H6z" fill="none" stroke="#222" stroke-width="1.500"/><path d="M8 12.500h2v2H8z"/><path d="M13 13.500h16" stroke="#3a6fe0" stroke-width="1.400" stroke-dasharray="2 2"/></svg></div>
    <div><svg viewBox="0 0 34 27"><path d="M6 10l22 13" stroke="#222" stroke-width="1.500"/><path d="M8 6l9 5M7 9l2-4M15 13l2-4" stroke="#3a6fe0" stroke-width="1.300"/><circle cx="15" cy="15" r="1.800" fill="#3a6fe0"/></svg></div>
    <div><svg viewBox="0 0 34 27"><path d="M11 9l-5 8 9 5 5-8" fill="none" stroke="#222" stroke-width="1.600"/><path d="M8 5l22 12" stroke="#3a6fe0" stroke-width="1.500" stroke-dasharray="3 2"/></svg></div>
    <div><svg viewBox="0 0 34 27"><path d="M6 10l21 12" stroke="#222" stroke-width="1.500"/><circle cx="21" cy="11.500" r="6.500" fill="none" stroke="#2d6fe8" stroke-width="1.600"/></svg></div>
  </div>
</div>
</body>
</html>
```
FILE: styles.css
```css
*{box-sizing:border-box}
body{margin:0;width:1600px;height:825px;overflow:hidden;position:relative;background:#efefef;color:#1a1a1a;font:12px "DejaVu Sans Condensed","DejaVu Sans",sans-serif;display:flex;flex-direction:column}
.defs{position:absolute}
svg{flex:none;display:block}
i,em{font-style:normal}
.titlebar{height:24px;background:#fff;display:flex;align-items:center;flex:none}
.logo{width:16px;height:16px}
.title{margin-left:5px;font:12.4px "Noto Sans",sans-serif;white-space:nowrap;letter-spacing:-.24px}
.winbtns{width:120px;height:24px;margin-left:auto;margin-right:15px}
.menubar{height:28px;flex:none;display:flex;align-items:center;font:12px "Noto Sans",sans-serif;letter-spacing:-.1px}
.docicon{width:13px;height:16px;margin:0 12px 0 2px}
.w33{width:33px}.w35{width:35px}.w42{width:42px}.w53{width:53px}.w48{width:48px}.w39{width:39px}.w46{width:46px}.w58{width:58px}.w40{width:40px}
.bell{width:20px;height:19px;margin:7px 0 0 auto}
.docbtns{display:flex;align-items:center;gap:10px;margin:10px 4px 0 39px}
.minus{width:6px;height:2px;background:#111;margin:5px 1px 0 3px}
.workspace{flex:1;min-height:0;display:flex}

.palhead{height:19px;border:1px solid #b3b3b3;display:flex;align-items:center;padding:0 4px 0 2px;font-size:12.2px;white-space:nowrap}
.palhead svg{color:#111}
.palhead span{flex:1}
.palhead em{font-size:13px;font-weight:bold;margin-right:13px}
.left{width:113px;padding-right:4px;border-right:1px solid #b9b9b9;display:flex;flex-direction:column;flex:none}
.palhead.basic{margin-top:1px;border-left:0}
.left .palhead{padding-right:3px}
.tools{height:348px;background:#fff;display:grid;grid-template-columns:31px 34px 34px;grid-auto-rows:23.4px;padding-top:1px}
.t{display:flex;align-items:center;justify-content:center;position:relative}
.t svg{width:22px;height:22px}
.t .wide{width:28px;height:24px}
.t.on{background:#cce5f7;border:1px solid #4b94cf}
.t.hov{background:#e9f2f9}
.t.more::after{content:"";position:absolute;right:0;bottom:1px;border-left:4px solid transparent;border-bottom:4px solid #111}
.collapse{height:17px;display:flex;align-items:center;justify-content:center;padding-right:2px;border-bottom:1px solid #b3b3b3}
.collapse b{width:30px;height:10px;border-radius:2px;background:#9b9b9b;color:#fff;display:flex;align-items:center;justify-content:center}
.collapse.last{border:0;height:4px;align-items:flex-start;padding-top:1px;overflow:hidden}
.palhead.sets{margin-top:6px;border-left:0;flex:none}
.setrow{display:flex;height:157.5px;background:#fff;overflow:hidden;flex:none}
.settools{display:grid;grid-template-columns:28px 40px;grid-auto-rows:23.3px;flex:1;align-content:start;padding-top:1px}
.settools .t.more::after{right:4px}
.scroll{width:16px;background:#f0f0f0;display:flex;flex-direction:column;align-items:center;padding:7px 0 5px}
.scroll svg{width:10px;height:6px}
.scroll i{width:16px;height:82px;background:#cdcdcd;margin:6px 0 auto}
.cats{list-style:none;margin:0;padding:0;flex:none}
.cats li{height:22.5px;display:flex;align-items:center;background:linear-gradient(#e9e9e9,#cdcdcd);border-top:1px solid #8f8f8f;font:bold 12px "Liberation Sans",sans-serif;color:#151515;white-space:nowrap}
.cats li svg{width:26px;height:22px;margin-right:10px}
.cats .sel{background:linear-gradient(#4b87a4,#90bdd2);color:#0a1820;border-top-color:#2a5a74}

.doc{width:1030px;margin-left:3px;border-right:1px solid #a9a9a9;border-left:1px solid #a0a0a0;display:flex;flex-direction:column;flex:none}
.tabs{height:24px;background:#f7f7f7;border-top:1px solid #b3b3b3;border-bottom:1px solid #6b6b6b;position:relative;display:flex;align-items:center}
.tabshape{position:absolute;left:0;top:0;width:240px;height:23px}
.tabname{position:relative;font-weight:bold;font-size:12px;margin-left:26px;width:168px;white-space:nowrap;color:#000}
.tabx{position:relative}
.tabdd{margin-left:auto;margin-right:5px}
.bar1,.bar2{display:flex;align-items:center;flex:none;font:12px "Liberation Sans",sans-serif;white-space:nowrap}
.bar1{height:26px;border-bottom:1px solid #c9c9c9}
.bar2{height:32px;padding-top:2px}
.sep{width:1px;height:18px;background:#aaa;flex:none}
.bar2 .sep{height:24px}
.bar1>svg{height:16px}.bar2>svg{height:22px}
.m1{margin-left:1px}.m2{margin-left:2px}.m3{margin-left:3px}.m4{margin-left:4px}.m5{margin-left:5px}.m6{margin-left:6px}.m7{margin-left:7px}.m8{margin-left:8px}.m9{margin-left:9px}.m10{margin-left:10px}.m11{margin-left:11px}.m12{margin-left:12px}.m13{margin-left:13px}.m15{margin-left:15px}.m20{margin-left:20px}.m37{margin-left:37px}.auto{margin-left:auto}
.w10{width:10px}.w14{width:14px}.w16{width:16px}.w17{width:17px}.w18{width:18px}.w20{width:20px}.w22{width:22px}.w24{width:24px}.w25{width:25px}.w32{width:32px}.w42{width:42px}.w53{width:53px}.w67{width:67px}.w71{width:71px}.w72{width:72px}
.combo{height:18px;flex:none;background:#fff;border:1px solid #999;display:flex;align-items:center;padding-left:2px;color:#1a1a1a}
.combo span{flex:1}
.combo .in{padding-left:3px}
.combo.tight{letter-spacing:-.3px}
.combo.flat>svg{width:5px;height:4px;margin:0 8px 0 5px;flex:none}
.combo.flat span{padding-left:1px}
.combo b{width:20px;height:16px;border-left:1px solid #999;background:#f2f2f2;display:flex;align-items:center;justify-content:center;flex:none}
.combo b svg{width:8px;height:5px}
.combo.btn{background:#f2f2f2;padding:0;justify-content:space-between}
.combo.btn .docg{width:14px;height:15px;margin-left:3px}
.act{background:#cce5f7;border:1px solid #4b94cf;display:flex;align-items:center;justify-content:center;flex:none}
.bar1 .act{height:21px}.bar1 .act svg{width:20px;height:18px}
.bar2 .act{height:26px}.bar2 .act svg{width:32px;height:24px}
.nx{width:25px;height:13px}
.bar1>.nx,.bar2>.nx{height:13px}
.dots{font-size:9px;color:#555}
.mode{font-size:11.4px}
.big{width:46px;height:25px;border:1px solid #b5b5b5;display:flex;flex:none}
.big svg{width:24px;height:22px}
.big b{flex:1;border-left:1px solid #b5b5b5;display:flex;align-items:center;justify-content:center}
.big b svg{width:8px;height:6px}
.bar2 .nx:last-child{margin-right:10px}
.canvas{width:1028px;height:691px;flex:none}
.rl{font:9.2px "Liberation Sans",sans-serif;fill:#555}
.edu{font:bold 5.5px "Liberation Sans",sans-serif;text-decoration:underline;fill:#222}

.right{flex:1;margin-left:6px;min-width:0}
.objinfo{margin-top:1px;border-left:1px solid #b3b3b3;border-bottom:1px solid #999;height:393px;display:flex;flex-direction:column}
.objinfo .palhead,.navp .palhead{border-left-width:1px;flex:none}
.objinfo .palhead{margin-left:-1px}
.otabs{margin-top:4px;height:21px;background:#f7f7f7;display:flex;align-items:center;flex:none;font-size:12.2px}
.otabs span{padding-left:8px;width:49px}
.otabs .cur{background:#efefef;height:21px;line-height:19px;padding-left:6px;width:39px;border-right:2px solid #777}
.otabs .ren{width:52px;padding-left:6px;border-right:1px solid #aaa}
.otabs .nx{margin:-6px 5px 0 auto}
.docrec{margin:4px 2px 0 1px;height:21px;border:1px solid #808080;flex:none;font-weight:bold;font-size:12px;line-height:19px;padding-left:4px;color:#000}
.rf{font-size:10.8px;height:20px;line-height:23px;padding-left:6px;flex:none}
.list{margin:1px 8px 5px 6px;height:119px;background:#fff;border-top:1px solid #999;border-left:1px solid #999;flex:none}
.pb{margin:0 7px 3px 6px;height:21px;border:1px solid #ababab;text-align:center;font:11.6px/18px "Liberation Sans",sans-serif;color:#a3a3a3;flex:none}
.split{margin:-1px 8px 0 6px;height:14px;border-top:1px solid #999;border-bottom:1px solid #999;display:flex;align-items:center;justify-content:center;flex:none}
.namerow{margin-top:auto;display:flex;align-items:center;padding:0 3px 1px 4px;color:#a3a3a3;font:12.5px "Liberation Sans",sans-serif}
.namerow i{margin-left:auto;width:399px;height:19px;border:1px solid #808080}
.navp{margin-top:6px}
.ntabs{height:23px;margin-top:1px;display:flex;align-items:center}
.ntabs span{width:27.1px;height:18px;display:flex;align-items:center;justify-content:center;border-right:1px solid #666}
.ntabs span svg{width:16px;height:15px}
.ntabs .n1{width:29px;border:0}.ntabs .n1 svg{width:18px;height:14px}
.ntabs .n2{width:28px;background:#f5f5f5;height:21px}
.ntabs .nx{margin:-4px 5px 0 auto}
.frow{display:flex;align-items:center;margin:4px 8px 0 9px;font:11.6px "Liberation Sans",sans-serif}
.frow.two{margin-top:7px}
.frow label{width:80px;white-space:nowrap}
.sel2{flex:1;height:19px;background:#fff;border:1px solid #bbb;border-top:2px solid #777;border-left:1px solid #777;padding-left:2px;display:flex;align-items:center;justify-content:space-between}
.sel2 b{width:17px;height:16px;background:#f0f0f0;border:1px solid #777;border-top-color:#ddd;border-left-color:#ddd;display:flex;align-items:center;justify-content:center}
.sel2 svg{width:8px;height:5px}
.search{margin:6px 8px 0 7px;height:20px;background:#fff;border-top:1px solid #888;border-left:1px solid #999;display:flex;align-items:center;justify-content:space-between;padding:0 2px 0 3px;font:11.6px "Liberation Sans",sans-serif;color:#777}
.search svg{width:16px;height:16px}
.table{margin:6px 7px 0 7px;border:1px solid #999;border-top-width:2px;border-bottom:0;height:250px;background:#fff;font-size:10.6px;display:flex;flex-direction:column}
.th{display:grid;grid-template-columns:55px 26px 109px 26px 94px 1fr;height:20px;background:#efefef;flex:none}
.th span{border-right:1px solid #aaa;line-height:20px;padding-left:5px}
.th span:last-child{border:0}
.th .sort{color:#888;font-size:9px;padding-left:9px}
.tr{display:grid;grid-template-columns:18px 18px 19px 26px 119px 1fr;height:16.5px;flex:none}
.tr.fill{flex:1;height:auto}
.tr span{display:flex;align-items:center}
.tr span:nth-child(-n+2){border-right:1px solid #999}
.tr span:nth-child(3){border-right:1px solid #ddd}
.tr span:first-child svg{width:14px;height:12px;margin-left:2px}
.tr span:nth-child(4) svg{width:12px;height:12px;margin-left:7px}
.tr span:nth-child(5){padding-left:5px}
.tr span:nth-child(6){padding-left:4px}
.tr .b{font-weight:bold;font-size:11px;color:#000}

.attr{position:absolute;left:142px;top:129px;width:116px;height:183px;background:#f2f2f2;border:2px solid #fff;border-right:2px solid #888;border-bottom:2px solid #777;outline:1px solid #d0d0d0;outline-offset:-1px}
.ahead{height:23px;background:#bfcddb;display:flex;align-items:center;padding:0 4px 0 2px}
.ahead span{font-weight:bold;font-size:12px;flex:1;letter-spacing:-.1px}
.ahead em{font-weight:bold;font-size:12px;margin-right:14px}
.ahead svg+svg{margin-left:15px}
.arow{display:flex;align-items:center;height:30px;padding-left:2px;font:12.2px "Liberation Sans",sans-serif}
.arow>svg{width:16px;height:16px}
.arow i{width:13px;height:13px;background:linear-gradient(135deg,#222,#444);margin:0 13px 0 11px;border:1px solid #777}
.arow .dn{width:9px;height:5px;margin-left:13px}
.fillline{width:88px;height:3px;margin:0 0 0 20px;border:1px solid #111;background:#fff}
.penline{width:88px;height:2px;margin:1px 0 0 20px;background:#000}
.opac{font:10.2px "Liberation Sans",sans-serif;margin:5px 0 0 14px;white-space:nowrap;letter-spacing:-.35px}
.shad{display:flex;align-items:center;font:10.2px "Liberation Sans",sans-serif;letter-spacing:-.3px;padding-left:19px;margin-top:5px;height:15px}
.shad i{width:12px;height:12px;background:#fff;border:1px solid #888;box-shadow:1px 1px 1px #777;margin:0 13px 0 16px}
.thick{margin:4px 0 0 4px;width:104px;height:16px;border:1px solid #aaa;background:#fff;display:flex;align-items:center;gap:2px;font:10.2px "Liberation Sans",sans-serif;letter-spacing:-.3px}
.thick i{width:80px;height:1px;background:#000;margin-left:1px}
.arrows{display:flex;align-items:center;height:24px;padding-left:9px}
.arrows .d{width:10px;height:6px}.arrows .h{width:13px;height:12px;margin:0 5px 0 9px}
.arrows b+.h{margin:0 9px 0 5px}
.arrows b{width:20px;height:17px;border:1px solid #ccc;border-right-color:#888;border-bottom-color:#888;display:flex;align-items:center;justify-content:center}
.arrows b svg{width:13px;height:7px}
.grip{border-top:1px solid #aaa;height:7px;display:flex;justify-content:center;align-items:flex-end}
.grip::after{content:"";width:28px;height:1px;background:#999}

.snap{position:absolute;left:141px;top:312px;width:281px;height:58px;background:#f2f2f2;border:2px solid #7e7e7e;border-top-color:#999}
.shead{height:25px;margin:0 0 0 1px;background:#868686;color:#fff;display:flex;align-items:center;justify-content:space-between;padding:0 4px 0 1px;font-weight:bold;font-size:12.2px}
.shead svg{color:#fff}
.sbtns{display:flex;padding:1px 0 0 1px}
.sbtns div{width:34.3px;height:27px;border:1px solid transparent}
.sbtns svg{width:32px;height:25px}
.sbtns .on{background:#cce5f7;border-color:#4b94cf}
```
